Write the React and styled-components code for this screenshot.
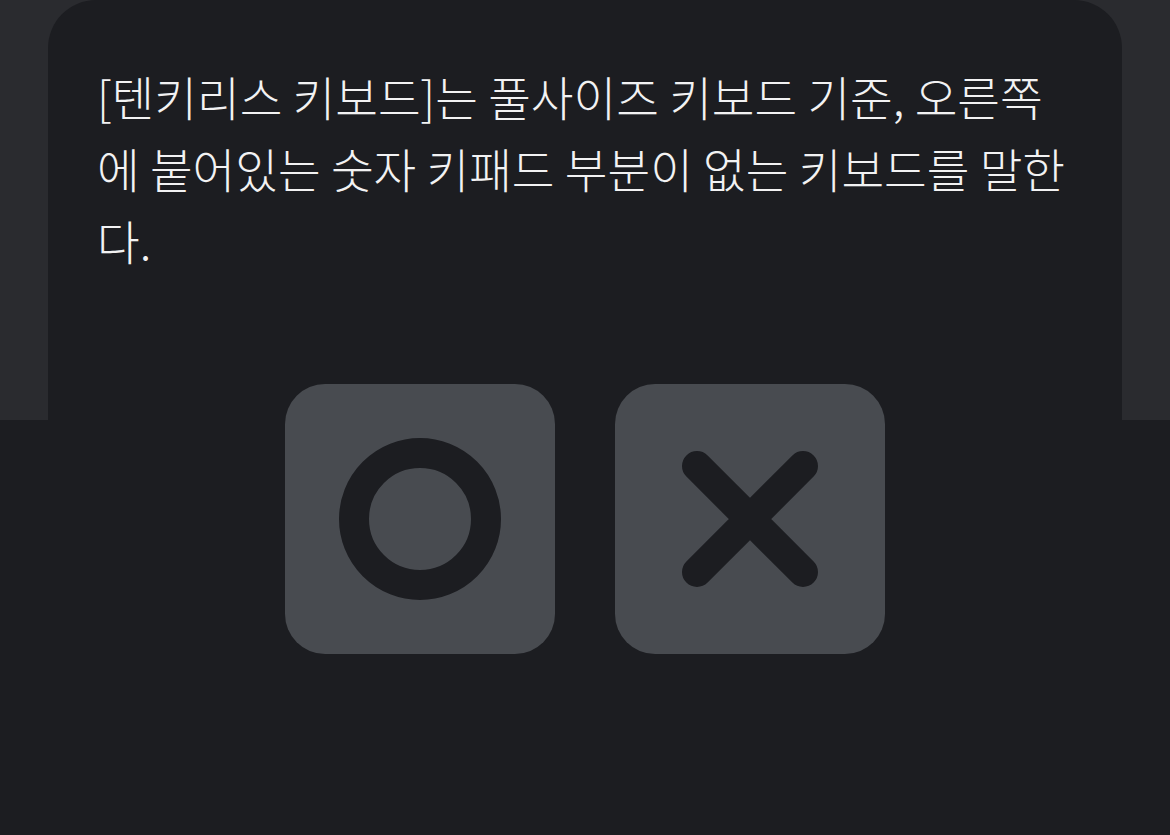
import React from "react";
import styled, { createGlobalStyle } from "styled-components";

const Global = createGlobalStyle`
  html, body { margin: 0; padding: 0; }
  body {
    background: linear-gradient(to bottom, #2a2b2f 0, #2a2b2f 420px, #1c1d21 420px, #1c1d21 100%);
    min-height: 100vh;
    font-family: "Noto Sans CJK KR", "Noto Sans", sans-serif;
  }
`;

const Page = styled.div`
  padding: 0 48px;
  min-height: 835px;
  display: flex;
  flex-direction: column;
`;

const Card = styled.section`
  flex: 1;
  background: #1c1d21;
  border-radius: 48px 48px 0 0;
  padding: 60px 48px 0 49px;
  display: flex;
  flex-direction: column;
`;

const Question = styled.p`
  margin: 0;
  color: #f2f2f3;
  font-size: 46.4px;
  line-height: 72px;
  font-weight: 300;
  letter-spacing: 0;
`;

const Choices = styled.div`
  display: flex;
  justify-content: center;
  gap: 60px;
  margin-top: 108px;
  margin-left: -1px;
`;

const ChoiceButton = styled.button`
  width: 270px;
  height: 270px;
  border: none;
  border-radius: 40px;
  background: #484b50;
  display: flex;
  align-items: center;
  justify-content: center;
  padding: 0;
  cursor: pointer;
  color: #1c1d21;
`;

export default function App() {
  return (
    <>
      <Global />
      <Page>
        <Card>
          <Question>
            [텐키리스 키보드]는 풀사이즈 키보드 기준, 오른쪽에 붙어있는 숫자 키패드 부분이 없는 키보드를 말한다.
          </Question>
          <Choices>
            <ChoiceButton aria-label="O">
              <svg width="270" height="270" viewBox="0 0 270 270">
                <circle cx="135" cy="135" r="66" fill="none" stroke="currentColor" strokeWidth="30" />
              </svg>
            </ChoiceButton>
            <ChoiceButton aria-label="X">
              <svg width="270" height="270" viewBox="0 0 270 270">
                <path d="M82 82 L188 188 M188 82 L82 188" stroke="currentColor" strokeWidth="30" strokeLinecap="round" />
              </svg>
            </ChoiceButton>
          </Choices>
        </Card>
      </Page>
    </>
  );
}
